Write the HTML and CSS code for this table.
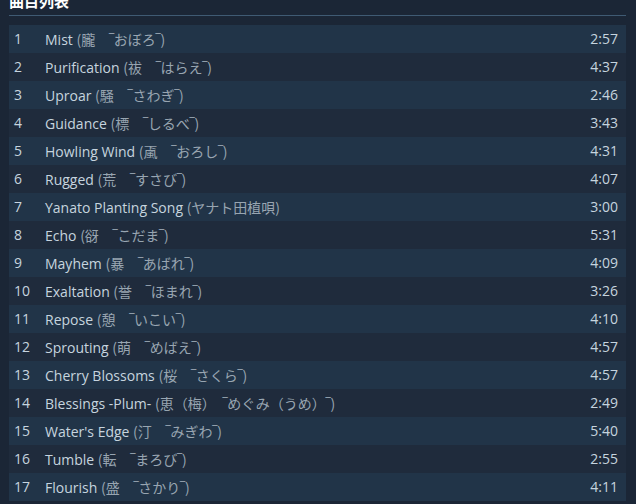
FILE: index.html
```html
<!DOCTYPE html>
<html lang="zh">
<head>
<meta charset="utf-8">
<link rel="stylesheet" href="styles.css">
</head>
<body>
<div class="panel">
  <h2 class="title">曲目列表</h2>
  <div class="tracks">
    <div class="row"><span class="num">1</span><span class="name">Mist <span class="jp">(朧　‾おぼろ‾)</span></span><span class="time">2:57</span></div>
    <div class="row"><span class="num">2</span><span class="name">Purification <span class="jp">(祓　‾はらえ‾)</span></span><span class="time">4:37</span></div>
    <div class="row"><span class="num">3</span><span class="name">Uproar <span class="jp">(騒　‾さわぎ‾)</span></span><span class="time">2:46</span></div>
    <div class="row"><span class="num">4</span><span class="name">Guidance <span class="jp">(標　‾しるべ‾)</span></span><span class="time">3:43</span></div>
    <div class="row"><span class="num">5</span><span class="name">Howling Wind <span class="jp">(颪　‾おろし‾)</span></span><span class="time">4:31</span></div>
    <div class="row"><span class="num">6</span><span class="name">Rugged <span class="jp">(荒　‾すさび‾)</span></span><span class="time">4:07</span></div>
    <div class="row"><span class="num">7</span><span class="name">Yanato Planting Song <span class="jp">(ヤナト田植唄)</span></span><span class="time">3:00</span></div>
    <div class="row"><span class="num">8</span><span class="name">Echo <span class="jp">(谺　‾こだま‾)</span></span><span class="time">5:31</span></div>
    <div class="row"><span class="num">9</span><span class="name">Mayhem <span class="jp">(暴　‾あばれ‾)</span></span><span class="time">4:09</span></div>
    <div class="row"><span class="num">10</span><span class="name">Exaltation <span class="jp">(誉　‾ほまれ‾)</span></span><span class="time">3:26</span></div>
    <div class="row"><span class="num">11</span><span class="name">Repose <span class="jp">(憩　‾いこい‾)</span></span><span class="time">4:10</span></div>
    <div class="row"><span class="num">12</span><span class="name">Sprouting <span class="jp">(萌　‾めばえ‾)</span></span><span class="time">4:57</span></div>
    <div class="row"><span class="num">13</span><span class="name">Cherry Blossoms <span class="jp">(桜　‾さくら‾)</span></span><span class="time">4:57</span></div>
    <div class="row"><span class="num">14</span><span class="name">Blessings -Plum- <span class="jp">(恵（梅）　‾めぐみ（うめ）‾)</span></span><span class="time">2:49</span></div>
    <div class="row"><span class="num">15</span><span class="name">Water's Edge <span class="jp">(汀　‾みぎわ‾)</span></span><span class="time">5:40</span></div>
    <div class="row"><span class="num">16</span><span class="name">Tumble <span class="jp">(転　‾まろび‾)</span></span><span class="time">2:55</span></div>
    <div class="row"><span class="num">17</span><span class="name">Flourish <span class="jp">(盛　‾さかり‾)</span></span><span class="time">4:11</span></div>
  </div>
</div>
</body>
</html>
```
FILE: styles.css
```css
html, body {
  margin: 0;
  padding: 0;
  background: #1b2636;
}
.panel {
  padding: 0 10px 0 9px;
  font-family: "Open Sans", "Noto Sans CJK JP", sans-serif;
}
.title {
  margin: -9px 0 0 0;
  padding: 0 0 4px 0;
  font-size: 15px;
  line-height: 20px;
  font-weight: bold;
  color: #ffffff;
  border-bottom: 1px solid #3f5a73;
  font-family: "Noto Sans CJK SC", sans-serif;
}
.tracks {
  margin-top: 9px;
  display: flex;
  flex-direction: column;
}
.row {
  display: flex;
  align-items: center;
  height: 28px;
  padding: 0 8px 0 5px;
  font-size: 14px;
  line-height: 18px;
  color: #c6d4df;
  background: #1f2b3c;
}
.row:nth-child(odd) {
  background: #213448;
}
.num {
  width: 31px;
  flex: none;
}
.name {
  flex: 1;
  white-space: nowrap;
}
.jp {
  color: #98a5b1;
  font-family: "Noto Sans CJK JP", sans-serif;
  font-size: 14px;
}
.time {
  flex: none;
  text-align: right;
}
```
